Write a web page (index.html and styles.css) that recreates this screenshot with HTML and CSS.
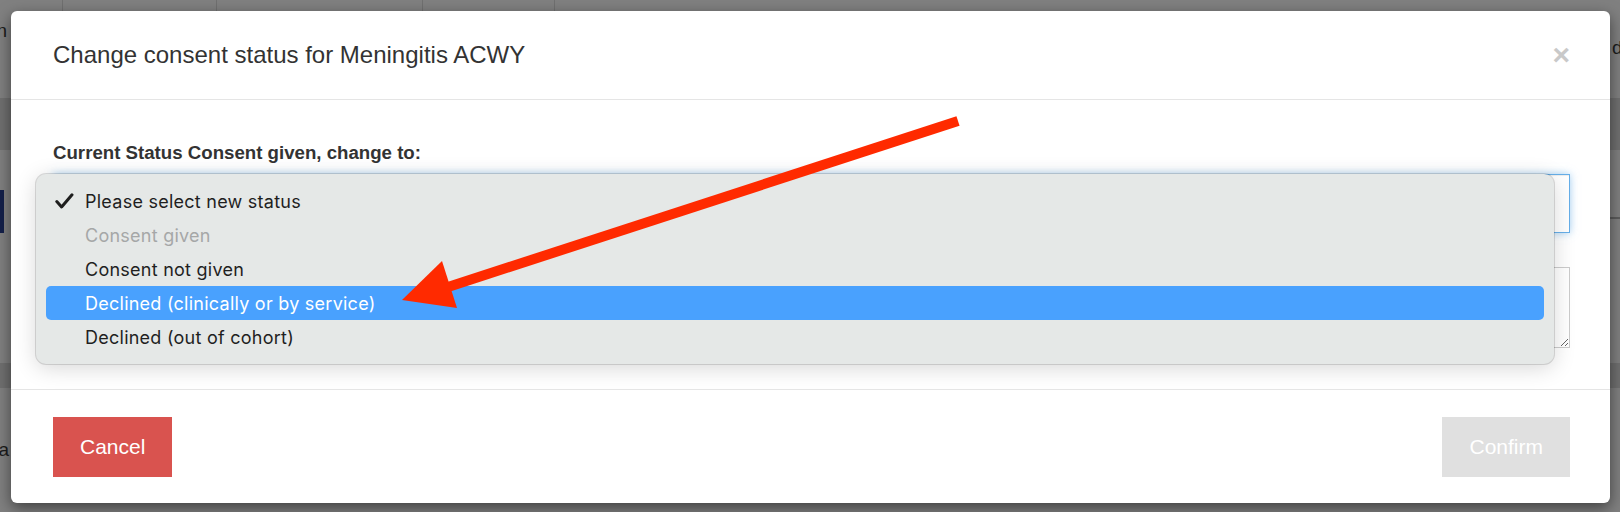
FILE: index.html
```html
<!DOCTYPE html>
<html>

<head>
    <meta charset="utf-8" />
    <title>Change consent status</title>
    <link rel="stylesheet" href="styles.css">
</head>

<body>
    <!-- page behind the modal -->
    <div class="page">
        <div class="page-head">
            <div class="cell cell-1"><span class="peek">Vaccination</span></div>
            <div class="cell cell-2"></div>
            <div class="cell cell-3"></div>
            <div class="cell cell-4"></div>
            <div class="cell cell-5"><span class="peek-right">details</span></div>
        </div>
        <div class="page-band"></div>
        <div class="page-main">
            <div class="page-nav"></div>
            <div class="page-rule"></div>
        </div>
        <div class="page-band"></div>
        <div class="page-foot"><span class="peek">Data</span></div>
    </div>

    <!-- modal -->
    <div class="modal">
        <div class="modal-header">
            <h4 class="modal-title">Change consent status for Meningitis ACWY</h4>
            <span class="close">&times;</span>
        </div>
        <div class="modal-body">
            <label class="field-label">Current Status Consent given, change to:</label>
            <div class="select"></div>
            <textarea class="notes"></textarea>
        </div>
        <div class="modal-footer">
            <button class="btn btn-cancel">Cancel</button>
            <button class="btn btn-confirm" disabled>Confirm</button>
        </div>

        <!-- native select popup -->
        <div class="menu">
            <div class="menu-item">
                <span class="check">
                    <svg width="19" height="16" viewBox="0 0 19 16">
                        <path d="M1.8 8.6 L6.6 14 L17 1.8" fill="none" stroke="#1e1e1e" stroke-width="3" stroke-linecap="round" stroke-linejoin="round" />
                    </svg>
                </span>
                Please select new status
            </div>
            <div class="menu-item disabled"><span class="check"></span>Consent given</div>
            <div class="menu-item"><span class="check"></span>Consent not given</div>
            <div class="menu-item active"><span class="check"></span>Declined (clinically or by service)</div>
            <div class="menu-item"><span class="check"></span>Declined (out of cohort)</div>
        </div>
    </div>

    <!-- red annotation arrow -->
    <svg class="arrow" width="1620" height="512" viewBox="0 0 1620 512">
        <line x1="958" y1="121" x2="445" y2="288" stroke="#ff2a00" stroke-width="10" />
        <polygon points="402,300 442,261 457,308" fill="#ff2a00" />
    </svg>
</body>

</html>
```

FILE: styles.css
```css
* {
    box-sizing: border-box;
}

body {
    margin: 0;
    width: 1620px;
    height: 512px;
    overflow: hidden;
    position: relative;
    background-color: #808080;
    font-family: "Liberation Sans", Arial, sans-serif;
    color: #333333;
}

/* page behind the overlay */
.page {
    height: 512px;
    display: flex;
    flex-direction: column;
}

.page-head {
    height: 98px;
    display: flex;
}

.cell {
    height: 100%;
    border-right: 1px solid #707070;
    display: flex;
    font-size: 19px;
    color: #1c1c1c;
}

.cell-1 {
    width: 63px;
    justify-content: flex-end;
    padding-right: 55px;
    padding-top: 20px;
}

.cell-2 {
    width: 154px;
}

.cell-3 {
    width: 206px;
}

.cell-4 {
    width: 132px;
}

.cell-5 {
    flex: 1;
    border-right: 0;
    padding-left: 1057px;
    padding-top: 37px;
    overflow: hidden;
}

.peek,
.peek-right {
    white-space: nowrap;
}

.page-band {
    height: 52px;
    background-color: #707070;
}

.page-main {
    height: 213px;
    position: relative;
    display: flex;
    flex-direction: column;
}

.page-nav {
    width: 4px;
    height: 43px;
    margin-top: 40px;
    background-color: #14204a;
}

.page-rule {
    height: 2px;
    margin-top: -16px;
    margin-left: 1600px;
    background-color: #5c5c5c;
}

.page-band:nth-of-type(4) {
    height: 25px;
}

.page-foot {
    flex: 1;
    display: flex;
    justify-content: flex-end;
    width: 9px;
    padding-top: 51px;
    font-size: 19px;
    color: #1c1c1c;
}

/* modal */
.modal {
    position: absolute;
    left: 11px;
    top: 11px;
    width: 1599px;
    height: 492px;
    background-color: #ffffff;
    border-radius: 6px;
    box-shadow: 0 5px 15px rgba(0, 0, 0, 0.5);
    display: flex;
    flex-direction: column;
}

.modal-header {
    height: 89px;
    padding: 0 40px 0 42px;
    border-bottom: 1px solid #e5e5e5;
    display: flex;
    align-items: center;
    justify-content: space-between;
}

.modal-title {
    margin: 0;
    font-size: 24px;
    font-weight: normal;
    line-height: 1.1;
    color: #333333;
}

.close {
    font-size: 30px;
    font-weight: bold;
    line-height: 1;
    color: #c9c9c9;
}

.modal-body {
    height: 289px;
    padding: 39px 40px 0 42px;
    display: flex;
    flex-direction: column;
}

.field-label {
    font-size: 18.67px;
    font-weight: bold;
    line-height: 27px;
}

.select {
    height: 59px;
    margin-top: 8px;
    border: 1px solid #66afe9;
    background-color: #ffffff;
    box-shadow: inset 0 1px 1px rgba(0, 0, 0, 0.075), 0 0 8px rgba(102, 175, 233, 0.6);
}

.notes {
    height: 81px;
    margin-top: 34px;
    border: 1px solid #cccccc;
    border-radius: 0;
    resize: vertical;
    font-family: inherit;
}

.modal-footer {
    height: 114px;
    padding: 27px 40px 0 42px;
    border-top: 1px solid #e5e5e5;
    display: flex;
    align-items: flex-start;
    justify-content: space-between;
}

.btn {
    height: 60px;
    padding: 0 26px;
    font-family: "Liberation Sans", Arial, sans-serif;
    font-size: 21px;
    color: #ffffff;
    border: 1px solid transparent;
    border-radius: 0;
}

.btn-cancel {
    background-color: #d9534f;
    border-color: #d9534f;
}

.btn-confirm {
    background-color: #e0e0e0;
    border-color: #e0e0e0;
    color: #ffffff;
}

/* native popup menu */
.menu {
    position: absolute;
    left: 25px;
    top: 163px;
    width: 1518px;
    height: 190px;
    padding: 10px;
    border-radius: 10px;
    background-color: #e5e8e7;
    box-shadow: 0 0 0 1px rgba(0, 0, 0, 0.13), 0 4px 22px rgba(0, 0, 0, 0.16);
    font-family: Inter, "Liberation Sans", sans-serif;
    font-size: 18px;
    letter-spacing: 0.25px;
    color: #1f1f1f;
}

.menu-item {
    height: 34px;
    padding-left: 9px;
    border-radius: 5px;
    display: flex;
    align-items: center;
}

.check {
    width: 30px;
    height: 16px;
    display: flex;
}

.menu-item.disabled {
    color: #a5a7a7;
}

.menu-item.active {
    background-color: #49a1fe;
    color: #ffffff;
}

.arrow {
    position: absolute;
    left: 0;
    top: 0;
    pointer-events: none;
}
```
